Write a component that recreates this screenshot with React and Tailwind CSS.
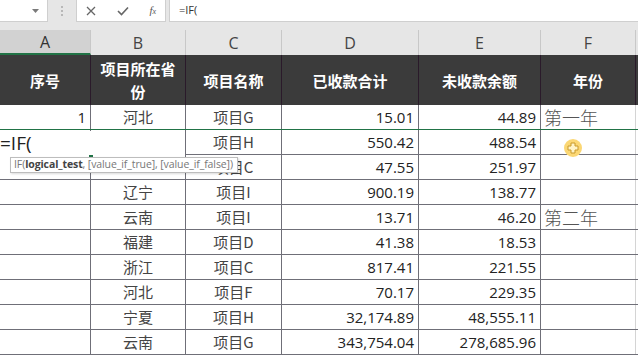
import React from "react";

const cols = ["w-[91px]", "w-[95px]", "w-[96px]", "w-[137px]", "w-[122px]", "w-[95px]"];

const rows = [
  ["1", "河北", "项目G", "15.01", "44.89", "第一年"],
  ["", "", "项目H", "550.42", "488.54", ""],
  ["", "", "项目C", "47.55", "251.97", ""],
  ["", "辽宁", "项目I", "900.19", "138.77", ""],
  ["", "云南", "项目I", "13.71", "46.20", "第二年"],
  ["", "福建", "项目D", "41.38", "18.53", ""],
  ["", "浙江", "项目C", "817.41", "221.55", ""],
  ["", "河北", "项目F", "70.17", "229.35", ""],
  ["", "宁夏", "项目H", "32,174.89", "48,555.11", ""],
  ["", "云南", "项目G", "343,754.04", "278,685.96", ""],
];

const cjk = "font-['Microsoft_YaHei','Noto_Sans_CJK_SC',sans-serif]";

function Cell({ i, v }) {
  const align =
    i === 0 || i === 3 || i === 4 ? "justify-end pr-1" : i === 5 ? "justify-start pl-[3px]" : "justify-center";
  const border = i < 5 ? "border-r border-[#6f6f78]" : "border-r border-[#d4d4d4]";
  const font =
    i === 5
      ? "text-[18px] text-[#555] font-light " + cjk
      : i === 0 || i === 3 || i === 4
      ? "text-[15px] text-[#222] font-['Open_Sans',sans-serif]"
      : "text-[15px] text-[#444] " + cjk;
  return (
    <div className={`${cols[i]} shrink-0 h-full flex items-center ${align} ${border} ${font}`}>
      {v}
    </div>
  );
}

export default function App() {
  return (
    <div className="w-[638px] h-[357px] overflow-hidden bg-white relative select-none">
      {/* formula bar */}
      <div className="h-[30px] bg-[#e6e6e6] flex items-start">
        <div className="w-[48px] h-[22px] bg-white border-r border-b border-[#cfcfcf] flex items-center justify-end pr-2">
          <svg width="7" height="4" viewBox="0 0 7 4"><path d="M0 0h7L3.5 4z" fill="#7a7a7a" /></svg>
        </div>
        <div className="w-[28px] h-[22px] flex flex-col items-center justify-center gap-[2px]">
          <span className="w-[2px] h-[2px] bg-[#b8b8b8]" />
          <span className="w-[2px] h-[2px] bg-[#b8b8b8]" />
          <span className="w-[2px] h-[2px] bg-[#b8b8b8]" />
        </div>
        <div className="w-[90px] h-[22px] bg-white border border-t-0 border-[#cfcfcf] flex items-center justify-between px-[9px]">
          <svg width="10" height="10" viewBox="0 0 10 10"><path d="M1 1l8 8M9 1l-8 8" stroke="#666" strokeWidth="1.3" /></svg>
          <svg width="12" height="10" viewBox="0 0 12 10"><path d="M1 5l3.5 3.5L11 1.5" stroke="#666" strokeWidth="1.6" fill="none" /></svg>
          <span className="text-[11px] italic text-[#555] font-['Liberation_Serif',serif]">f<span className="text-[8px]">x</span></span>
        </div>
        <div className="ml-[3px] flex-1 h-[22px] bg-white border border-t-0 border-r-0 border-[#cfcfcf] flex items-center pl-[9px] text-[11px] text-[#333] font-['Open_Sans',sans-serif]">
          =IF(
        </div>
      </div>

      {/* column letters */}
      <div className="h-[25px] bg-[#e6e6e6] flex text-[16px] text-[#444] font-['Open_Sans',sans-serif]">
        {["A", "B", "C", "D", "E", "F"].map((c, i) => (
          <div
            key={c}
            className={`${cols[i]} shrink-0 flex items-center justify-center border-r border-[#c8c8c8] ${
              i === 0 ? "bg-[#d2d2d2] border-b-2 border-b-[#217346] text-[#333]" : ""
            }`}
          >
            {c}
          </div>
        ))}
      </div>

      {/* header */}
      <div className={`h-[50px] bg-[#3b3b3b] flex text-white font-bold text-[15px] leading-[23px] ${cjk}`}>
        {["序号", "项目所在省份", "项目名称", "已收款合计", "未收款余额", "年份"].map((h, i) => (
          <div
            key={h}
            className={`${cols[i]} shrink-0 flex items-center justify-center text-center px-[6px] border-r border-[#2a1a2a]`}
          >
            {h}
          </div>
        ))}
      </div>

      {/* body */}
      {rows.map((r, ri) => (
        <div
          key={ri}
          className={`h-[25px] flex border-b ${ri === 0 ? "border-[#217346]" : "border-[#6f6f78]"}`}
        >
          {r.map((v, i) => (
            <Cell key={i} i={i} v={v} />
          ))}
        </div>
      ))}

      {/* in-cell editor over A2:B2 */}
      <div className="absolute left-0 top-[131px] w-[186px] h-[24px] bg-white border-r border-[#6f6f78] flex items-center text-[19px] text-[#222] font-['Open_Sans',sans-serif] leading-none">
        =IF(
      </div>
      <div className="absolute left-[89px] top-[155px] w-[4px] h-[3px] bg-[#217346]" />

      {/* tooltip */}
      <div className="absolute left-[10px] top-[157px] w-[228px] h-[16px] bg-white border border-[#bdbdbd] shadow-[1px_1px_2px_rgba(0,0,0,0.15)] flex items-center pl-[3px] text-[10.5px] tracking-[-0.1px] text-[#777] font-['Open_Sans',sans-serif] whitespace-nowrap">
        IF(<span className="font-bold text-[#444]">logical_test</span>, [value_if_true], [value_if_false])
      </div>

      {/* cursor */}
      <div className="absolute left-[564px] top-[139px] w-[18px] h-[18px] rounded-full bg-[#fbd774] flex items-center justify-center">
        <svg width="12" height="12" viewBox="0 0 12 12">
          <path d="M4 1h4v3h3v4H8v3H4V8H1V4h3z" fill="#fff3c8" stroke="#c99a2a" strokeWidth="1" />
        </svg>
      </div>
    </div>
  );
}
